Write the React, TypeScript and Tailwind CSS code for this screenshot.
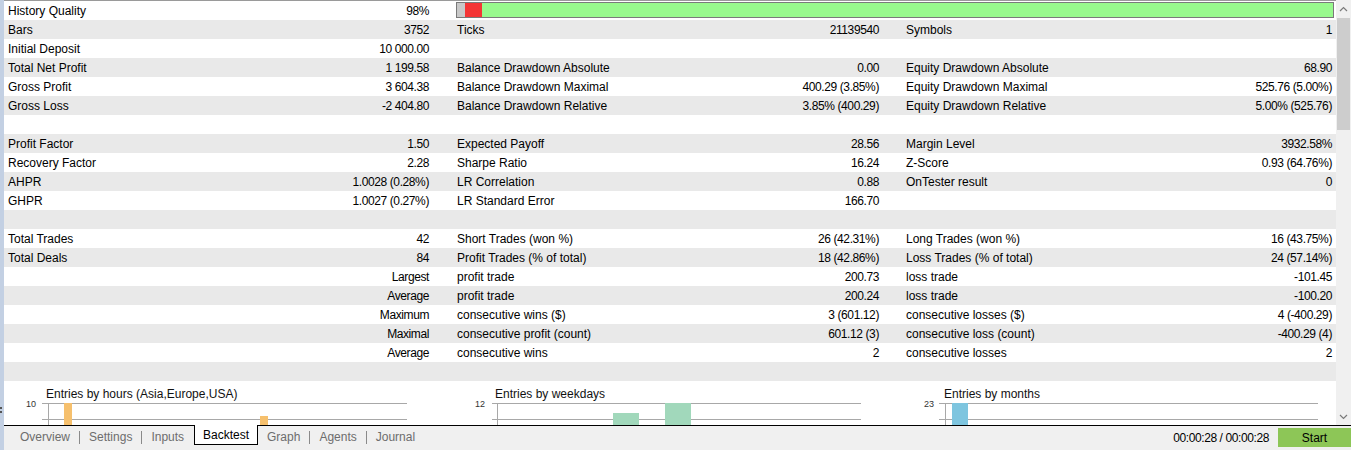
import React from 'react';

// one label/value pair of a report column
type Cell = [string, string];
type Row = [Cell, Cell, Cell];

const E: Cell = ['', ''];

const rows: Row[] = [
  [['Bars', '3752'], ['Ticks', '21139540'], ['Symbols', '1']],
  [['Initial Deposit', '10 000.00'], E, E],
  [['Total Net Profit', '1 199.58'], ['Balance Drawdown Absolute', '0.00'], ['Equity Drawdown Absolute', '68.90']],
  [['Gross Profit', '3 604.38'], ['Balance Drawdown Maximal', '400.29 (3.85%)'], ['Equity Drawdown Maximal', '525.76 (5.00%)']],
  [['Gross Loss', '-2 404.80'], ['Balance Drawdown Relative', '3.85% (400.29)'], ['Equity Drawdown Relative', '5.00% (525.76)']],
  [E, E, E],
  [['Profit Factor', '1.50'], ['Expected Payoff', '28.56'], ['Margin Level', '3932.58%']],
  [['Recovery Factor', '2.28'], ['Sharpe Ratio', '16.24'], ['Z-Score', '0.93 (64.76%)']],
  [['AHPR', '1.0028 (0.28%)'], ['LR Correlation', '0.88'], ['OnTester result', '0']],
  [['GHPR', '1.0027 (0.27%)'], ['LR Standard Error', '166.70'], E],
  [E, E, E],
  [['Total Trades', '42'], ['Short Trades (won %)', '26 (42.31%)'], ['Long Trades (won %)', '16 (43.75%)']],
  [['Total Deals', '84'], ['Profit Trades (% of total)', '18 (42.86%)'], ['Loss Trades (% of total)', '24 (57.14%)']],
  [['', 'Largest'], ['profit trade', '200.73'], ['loss trade', '-101.45']],
  [['', 'Average'], ['profit trade', '200.24'], ['loss trade', '-100.20']],
  [['', 'Maximum'], ['consecutive wins ($)', '3 (601.12)'], ['consecutive losses ($)', '4 (-400.29)']],
  [['', 'Maximal'], ['consecutive profit (count)', '601.12 (3)'], ['consecutive loss (count)', '-400.29 (4)']],
  [['', 'Average'], ['consecutive wins', '2'], ['consecutive losses', '2']],
  [E, E, E],
];

const Pair = ({ cell, className }: { cell: Cell; className: string }) => (
  <div className={`flex justify-between whitespace-nowrap pt-[1px] leading-[18px] ${className}`}>
    <span>{cell[0]}</span>
    <span className="tracking-[-0.4px]">{cell[1]}</span>
  </div>
);

const Chevron = ({ up }: { up?: boolean }) => (
  <svg width="9" height="6" viewBox="0 0 9 6">
    <polyline
      points={up ? '1,5 4.5,1.5 8,5' : '1,1 4.5,4.5 8,1'}
      fill="none"
      stroke="#7a7a7a"
      strokeWidth="1.2"
    />
  </svg>
);

type Bar = { x: number; w: number; top: number };

const MiniChart = ({
  title, max, className, titlePad, labelEnd, gridFrom, gridTo, axis, bars, color,
}: {
  title: string; max: string; className: string; titlePad: string;
  labelEnd: number; gridFrom: number; gridTo: number; axis: number; bars: Bar[]; color: string;
}) => (
  <div className={`flex flex-col ${className}`}>
    <div className={`h-[19px] pt-[6px] text-[12px] leading-[14px] text-[#111] ${titlePad}`}>{title}</div>
    <svg height="25" className="w-full">
      <text x={labelEnd} y="7" textAnchor="end" fontSize="9" fill="#333" fontFamily="Liberation Sans, Arial, sans-serif">{max}</text>
      <line x1={gridFrom} y1="3.5" x2={gridTo} y2="3.5" stroke="#a8a8a8" />
      <line x1={gridFrom} y1="19.5" x2={gridTo} y2="19.5" stroke="#a8a8a8" />
      <line x1={axis + 0.5} y1="3.5" x2={axis + 0.5} y2="25" stroke="#a8a8a8" />
      {bars.map((b, i) => (
        <rect key={i} x={b.x} y={b.top} width={b.w} height={25 - b.top} fill={color} />
      ))}
    </svg>
  </div>
);

const Sep = () => <div className="w-px h-[13px] mt-[5px] bg-[#8a8a8a]" />;

export default function App() {
  return (
    <div className="flex w-[1351px] h-[450px] bg-white text-black text-[12px] font-['Liberation_Sans',Arial,sans-serif] overflow-hidden">
      {/* splitter strip */}
      <div className="w-[4px] shrink-0 bg-[#c3d0e3] flex flex-col items-start">
        <div className="mt-[407px] w-[2px] h-[2px] bg-[#555]" />
        <div className="mt-[2px] w-[2px] h-[2px] bg-[#555]" />
      </div>

      <div className="flex-1 flex flex-col">
        <div className="flex h-[425px]">
          {/* report */}
          <div className="w-[1332px] flex flex-col border-t border-[#9a9a9a]">
            <div className="flex h-[19px] pl-[4px] bg-white">
              <Pair cell={['History Quality', '98%']} className="w-[421px]" />
              <div className="ml-[27px] mr-[2px] flex-1 mt-[1px] h-[16px] border border-[#7a7a7a] flex">
                <div className="w-[8px] bg-[#c9c9c9]" />
                <div className="w-[17px] bg-[#f43535]" />
                <div className="flex-1 bg-[#98f98d]" />
              </div>
            </div>
            {rows.map((r, i) => (
              <div
                key={i}
                className={`flex h-[19px] px-[4px] ${i % 2 === 0 ? 'bg-[#e9e9e9]' : 'bg-white'}`}
              >
                <Pair cell={r[0]} className="w-[421px]" />
                <Pair cell={r[1]} className="ml-[28px] w-[422px]" />
                <Pair cell={r[2]} className="ml-[27px] w-[426px]" />
              </div>
            ))}

            {/* entry distribution charts */}
            <div className="flex h-[44px] font-[Arial,'Liberation_Sans',sans-serif]">
              <MiniChart
                title="Entries by hours (Asia,Europe,USA)"
                max="10"
                className="ml-[16px] w-[390px]"
                titlePad="pl-[26px]"
                labelEnd={16}
                gridFrom={22}
                gridTo={387}
                axis={28}
                color="#f6c06d"
                bars={[{ x: 44, w: 8, top: 3 }, { x: 240, w: 8, top: 16 }]}
              />
              <MiniChart
                title="Entries by weekdays"
                max="12"
                className="ml-[60px] w-[395px]"
                titlePad="pl-[25px]"
                labelEnd={15}
                gridFrom={22}
                gridTo={391}
                axis={27}
                color="#a1d8bb"
                bars={[{ x: 143, w: 26, top: 13 }, { x: 195, w: 26, top: 3 }]}
              />
              <MiniChart
                title="Entries by months"
                max="23"
                className="ml-[55px] w-[400px]"
                titlePad="pl-[24px]"
                labelEnd={14}
                gridFrom={19}
                gridTo={398}
                axis={25}
                color="#7ec5df"
                bars={[{ x: 32, w: 16, top: 3 }]}
              />
            </div>
          </div>

          {/* vertical scrollbar */}
          <div className="w-[15px] bg-[#f0f0f0] flex flex-col items-center">
            <div className="h-[18px] flex items-center justify-center"><Chevron up /></div>
            <div className="w-[13px] h-[112px] bg-[#cdcdcd]" />
            <div className="flex-1" />
            <div className="h-[17px] flex items-center justify-center"><Chevron /></div>
          </div>
        </div>

        {/* bottom tab strip */}
        <div className="flex h-[25px] bg-[#f0f0f0] text-[#6d6d6d] leading-[14px]">
          <div className="flex items-start border-t border-black pl-[7px] w-[190px]">
            <div className="px-[9px] pt-[4px]">Overview</div>
            <Sep />
            <div className="px-[9px] pt-[4px]">Settings</div>
            <Sep />
            <div className="px-[9px] pt-[4px]">Inputs</div>
          </div>
          <div className="h-[20px] px-[8px] pt-[3px] bg-white border-x border-b border-black text-black">Backtest</div>
          <div className="flex-1 flex items-start border-t border-black">
            <div className="px-[9px] pt-[4px]">Graph</div>
            <Sep />
            <div className="px-[9px] pt-[4px]">Agents</div>
            <Sep />
            <div className="px-[9px] pt-[4px]">Journal</div>
            <div className="flex-1" />
            <div className="pt-[5px] mr-[9px] text-black tracking-[-0.4px]">00:00:28 / 00:00:28</div>
            <div className="mt-[2px] w-[73px] h-[19px] bg-[#8dc657] text-black flex items-center justify-center">Start</div>
          </div>
        </div>
      </div>
    </div>
  );
}
